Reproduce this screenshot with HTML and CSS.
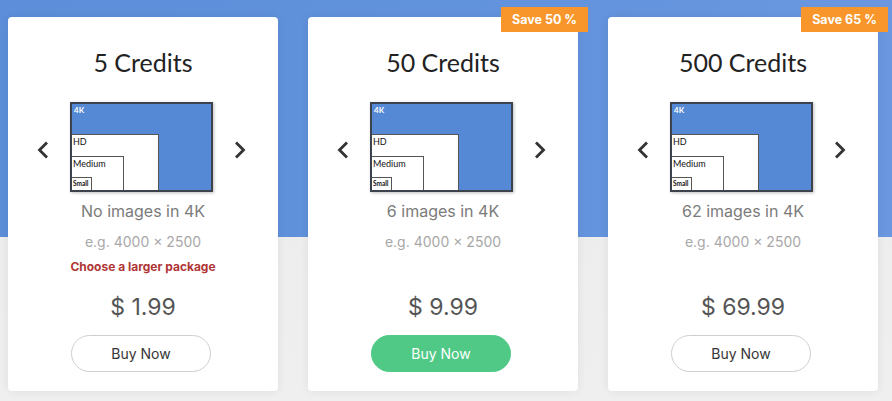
FILE: index.html
```html
<!DOCTYPE html>
<html lang="en">
<head>
<meta charset="utf-8">
<title>Credit packages</title>
<link rel="stylesheet" href="styles.css">
</head>
<body>
<div class="page">
  <div class="cards">
    <div class="card">
      <h2 class="title">5 Credits</h2>
      <div class="viewer">
        <svg class="arrow" viewBox="0 0 12 18" width="12" height="18"><path d="M10 1.5 L2.5 9 L10 16.5" fill="none" stroke="#333" stroke-width="2.8"/></svg>
        <div class="diagram">
          <span class="lbl lbl-4k">4K</span>
          <div class="box hd"><span class="lbl">HD</span>
            <div class="box medium"><span class="lbl">Medium</span>
              <div class="box small"><span class="lbl lbl-s">Small</span></div>
            </div>
          </div>
        </div>
        <svg class="arrow" viewBox="0 0 12 18" width="12" height="18"><path d="M2 1.5 L9.5 9 L2 16.5" fill="none" stroke="#333" stroke-width="2.8"/></svg>
      </div>
      <p class="count">No images in 4K</p>
      <p class="example">e.g. 4000 × 2500</p>
      <p class="note">Choose a larger package</p>
      <p class="price">$ 1.99</p>
      <button class="buy">Buy Now</button>
    </div>

    <div class="card">
      <span class="badge">Save 50 %</span>
      <h2 class="title">50 Credits</h2>
      <div class="viewer">
        <svg class="arrow" viewBox="0 0 12 18" width="12" height="18"><path d="M10 1.5 L2.5 9 L10 16.5" fill="none" stroke="#333" stroke-width="2.8"/></svg>
        <div class="diagram">
          <span class="lbl lbl-4k">4K</span>
          <div class="box hd"><span class="lbl">HD</span>
            <div class="box medium"><span class="lbl">Medium</span>
              <div class="box small"><span class="lbl lbl-s">Small</span></div>
            </div>
          </div>
        </div>
        <svg class="arrow" viewBox="0 0 12 18" width="12" height="18"><path d="M2 1.5 L9.5 9 L2 16.5" fill="none" stroke="#333" stroke-width="2.8"/></svg>
      </div>
      <p class="count">6 images in 4K</p>
      <p class="example">e.g. 4000 × 2500</p>
      <p class="note"></p>
      <p class="price">$ 9.99</p>
      <button class="buy buy-primary">Buy Now</button>
    </div>

    <div class="card">
      <span class="badge">Save 65 %</span>
      <h2 class="title">500 Credits</h2>
      <div class="viewer">
        <svg class="arrow" viewBox="0 0 12 18" width="12" height="18"><path d="M10 1.5 L2.5 9 L10 16.5" fill="none" stroke="#333" stroke-width="2.8"/></svg>
        <div class="diagram">
          <span class="lbl lbl-4k">4K</span>
          <div class="box hd"><span class="lbl">HD</span>
            <div class="box medium"><span class="lbl">Medium</span>
              <div class="box small"><span class="lbl lbl-s">Small</span></div>
            </div>
          </div>
        </div>
        <svg class="arrow" viewBox="0 0 12 18" width="12" height="18"><path d="M2 1.5 L9.5 9 L2 16.5" fill="none" stroke="#333" stroke-width="2.8"/></svg>
      </div>
      <p class="count">62 images in 4K</p>
      <p class="example">e.g. 4000 × 2500</p>
      <p class="note"></p>
      <p class="price">$ 69.99</p>
      <button class="buy">Buy Now</button>
    </div>
  </div>
</div>
</body>
</html>
```

FILE: styles.css
```css
* { box-sizing: border-box; }
html, body { margin: 0; padding: 0; }
body {
  width: 892px;
  height: 401px;
  overflow: hidden;
  font-family: Inter, "Noto Sans", sans-serif;
  background:
    linear-gradient(90deg, #5c8ed9 0%, #6192dc 50%, #6a97e0 100%) top / 100% 237px no-repeat,
    linear-gradient(180deg, #ebebeb 0%, #efefef 100%);
}
.page { padding: 17px 14px 0 8px; }
.cards { display: flex; gap: 30px; }
.card {
  position: relative;
  width: 270px;
  height: 374px;
  background: #fff;
  border-radius: 4px;
  box-shadow: 0 0 10px rgba(0,0,0,0.07);
  display: flex;
  flex-direction: column;
  align-items: center;
  padding-top: 30px;
}
.badge {
  position: absolute;
  top: -10px;
  right: -10px;
  width: 87px;
  height: 25px;
  background: #f8962b;
  color: #fff;
  font-weight: 700;
  font-size: 12.5px;
  line-height: 25px;
  text-align: center;
}
.title {
  margin: 0;
  font-family: Lato, sans-serif;
  font-weight: 400;
  font-size: 25px;
  line-height: 31px;
  color: #222;
}
.viewer {
  margin-top: 24px;
  display: flex;
  align-items: center;
  gap: 21px;
  margin-left: -3px;
}
.arrow { display: block; margin-top: 5px; }
.diagram {
  position: relative;
  width: 143px;
  height: 90px;
  background: #5588d5;
  border: 2px solid #3d434d;
  box-shadow: 1px 1px 3px rgba(0,0,0,0.25);
}
.box {
  position: absolute;
  left: 0;
  bottom: 0;
  background: #fff;
  border: 1.5px solid #555;
  border-left: none;
  border-bottom: none;
}
.hd { width: 87px; height: 56px; }
.medium { width: 52px; height: 34px; }
.small { width: 20px; height: 13px; }
.lbl {
  position: absolute;
  left: 1px;
  top: 2px;
  font-family: Lato, sans-serif;
  font-size: 9px;
  line-height: 10px;
  color: #111;
}
.lbl-4k {
  left: 2px;
  top: 1px;
  color: #fff;
  font-weight: 700;
  font-size: 8px;
}
.lbl-s {
  top: 1px;
  font-size: 6.5px;
  font-weight: 700;
  line-height: 9px;
}
.count {
  margin: 9px 0 0;
  font-size: 16px;
  line-height: 20px;
  color: #7b7b7b;
}
.example {
  margin: 12px 0 0;
  font-size: 14px;
  line-height: 18px;
  color: #a8a8a8;
}
.note {
  margin: 8px 0 0;
  min-height: 16px;
  font-size: 12px;
  line-height: 16px;
  font-weight: 700;
  color: #b03636;
}
.price {
  margin: 17px 0 0;
  font-size: 23px;
  line-height: 30px;
  color: #555;
}
.buy {
  margin: 13px 0 0 -4px;
  width: 140px;
  height: 37px;
  border: 1px solid #cfcfcf;
  border-radius: 19px;
  background: #fff;
  font-family: Inter, "Noto Sans", sans-serif;
  font-size: 14px;
  color: #333;
  padding: 0;
}
.buy-primary {
  background: #50c986;
  border-color: #50c986;
  color: #fff;
}
```
